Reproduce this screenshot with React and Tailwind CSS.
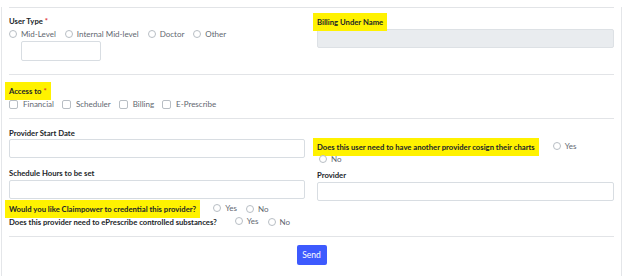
import React from "react";

const Radio = ({ label }) => (
  <span className="inline-flex items-center gap-[4px] mr-[9px]">
    <span className="inline-block w-[8px] h-[8px] rounded-full border border-[#b8bec4] bg-white" />
    <span className="text-[#5f6770]">{label}</span>
  </span>
);

const Check = ({ label }) => (
  <span className="inline-flex items-center gap-[5px] mr-[8px]">
    <span className="inline-block w-[9px] h-[9px] rounded-[2px] border border-[#b8bec4] bg-white" />
    <span className="text-[#5f6770]">{label}</span>
  </span>
);

const Hl = ({ children }) => (
  <span className="inline-block bg-[#fff200] px-[4px] -mx-[4px] py-[4px] -my-[4px]">{children}</span>
);

const Star = () => <span className="text-[#e03131] ml-[2px]">*</span>;

const Input = ({ className = "" }) => (
  <div className={"border border-[#d8dde2] rounded-[2px] bg-white " + className} />
);

const B = ({ children, className = "" }) => (
  <div className={"font-bold text-[7.7px] " + className}>{children}</div>
);

export default function App() {
  return (
    <div className="w-[624px] h-[276px] bg-white overflow-hidden" style={{ fontFamily: "Lato, 'Open Sans', sans-serif" }}>
      <div className="ml-[1px] w-[621px] h-[274px] border-l border-r border-b border-[#e4e6e9] px-[7px] text-[8px] leading-[10px] text-[#212529]">
        <div className="mt-[7px] border-t border-[#e2e4e7]" />
        {/* Section 1 */}
        <div className="flex h-[66px]">
          <div className="w-[296px] pt-[8px]">
            <B>User Type<Star /></B>
            <div className="mt-[3px] flex">
              <Radio label="Mid-Level" />
              <Radio label="Internal Mid-level" />
              <Radio label="Doctor" />
              <Radio label="Other" />
            </div>
            <Input className="ml-[12px] mt-[2px] w-[80px] h-[20px]" />
          </div>
          <div className="ml-[12px] flex-1 pt-[9px]">
            <B><Hl>Billing Under Name</Hl></B>
            <div className="mt-[2px] h-[19px] bg-[#e9ecef] border border-[#dde1e5] rounded-[2px]" />
          </div>
        </div>
        <div className="border-t border-[#e2e4e7]" />
        {/* Section 2 */}
        <div className="h-[43px] pt-[11px]">
          <B><Hl>Access to<Star /></Hl></B>
          <div className="mt-[3px] flex">
            <Check label="Financial" />
            <Check label="Scheduler" />
            <Check label="Billing" />
            <Check label="E-Prescribe" />
          </div>
        </div>
        <div className="border-t border-[#e2e4e7]" />
        {/* Section 3 */}
        <div className="flex">
          <div className="w-[296px] pt-[9px]">
            <B>Provider Start Date</B>
            <Input className="mt-[1px] h-[19px]" />
            <B className="mt-[10px]">Schedule Hours to be set</B>
            <Input className="mt-[2px] h-[19px]" />
          </div>
          <div className="ml-[12px] flex-1 pt-[22px]">
            <div className="flex items-center">
              <B><Hl>Does this user need to have another provider cosign their charts</Hl></B>
              <span className="ml-[18px]"><Radio label="Yes" /></span>
            </div>
            <div className="mt-[2px] ml-[2px]"><Radio label="No" /></div>
            <B className="mt-[5px]">Provider</B>
            <Input className="mt-[2px] h-[19px]" />
          </div>
        </div>
        <div className="mt-[2px] flex items-center">
          <B><Hl>Would you like Claimpower to credential this provider?</Hl></B>
          <span className="ml-[17px]"><Radio label="Yes" /></span>
          <Radio label="No" />
        </div>
        <div className="mt-[2px] flex items-center">
          <B>Does this provider need to ePrescribe controlled substances?</B>
          <span className="ml-[18px]"><Radio label="Yes" /></span>
          <Radio label="No" />
        </div>
        <div className="mt-[9px] border-t border-[#e2e4e7]" />
        <div className="flex justify-center mt-[8px]">
          <button className="w-[30px] h-[20px] rounded-[2px] bg-[#3d5afe] text-white text-[8.5px]">Send</button>
        </div>
      </div>
    </div>
  );
}
